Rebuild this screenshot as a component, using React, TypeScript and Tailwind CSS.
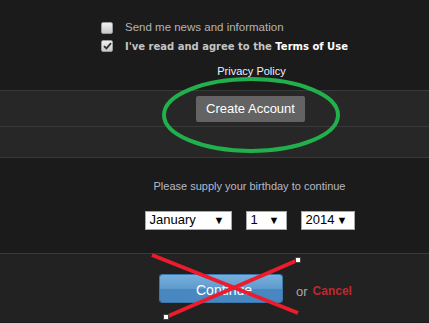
import React from "react";

const MONTH = "January";

function Box({ checked }: { checked?: boolean }) {
  return (
    <span className="flex h-[12px] w-[12px] items-center justify-center rounded-[2px] border border-[#9a9a9a] bg-gradient-to-b from-[#f0f0f0] to-[#c8c8c8]">
      {checked && (
        <svg width="9" height="8" viewBox="0 0 9 8">
          <path d="M1 4.2 L3.4 6.4 L8 1.2" fill="none" stroke="#333" strokeWidth="1.8" />
        </svg>
      )}
    </span>
  );
}

function Select({ value, w }: { value: string; w: string }) {
  return (
    <div
      className={`flex h-[19px] items-center justify-between border border-[#a8a8a8] bg-white pl-[4px] pr-[6px] text-[13px] text-black ${w}`}
    >
      <span>{value}</span>
      <span className="text-[11px]">▼</span>
    </div>
  );
}

export default function App() {
  return (
    <div className="relative h-[323px] w-[429px] overflow-hidden bg-[#1b1b1b] font-['Liberation_Sans',Arial,sans-serif]">
      {/* terms */}
      <div className="flex h-[90px] flex-col pl-[101px] pt-[19px]">
        <div className="flex h-[18px] items-center gap-[12px]">
          <Box />
          <span className="text-[11.5px] text-[#b4b4b4]">Send me news and information</span>
        </div>
        <div className="flex h-[18px] items-center gap-[12px]">
          <Box checked />
          <span className="font-['DejaVu_Sans',sans-serif] text-[10px] font-bold text-[#c4c4c4]">
            I&apos;ve read and agree to the <span className="text-white">Terms of Use</span>
          </span>
        </div>
        <div className="mt-[8px] flex justify-center pr-[27px] text-[11px] text-[#eef2ff]">
          Privacy Policy
        </div>
      </div>

      {/* create account band */}
      <div className="flex h-[37px] items-center justify-center border-y border-[#393939] bg-[#272727] pl-[72px]">
        <button className="h-[26px] w-[109px] rounded-[2px] bg-[#636363] text-[13px] text-white">
          Create Account
        </button>
      </div>
      <div className="h-[31px] border-b border-[#393939] bg-[#272727]" />

      {/* birthday */}
      <div className="flex h-[95px] flex-col items-center pl-[70px] pt-[20px]">
        <p className="text-[11px] text-[#b8b8c8]">Please supply your birthday to continue</p>
        <div className="mt-[16px] flex gap-[14px]">
          <Select value={MONTH} w="w-[87px]" />
          <Select value="1" w="w-[41px]" />
          <Select value="2014" w="w-[54px]" />
        </div>
      </div>

      {/* continue */}
      <div className="flex h-[69px] items-start border-t border-[#3a3a3a] bg-[#222] pl-[159px] pt-[20px]">
        <button className="flex h-[29px] w-[124px] flex-col overflow-hidden rounded-[3px] border border-[#3b78ad] text-[14px] text-white">
          <span className="h-1/2 w-full bg-gradient-to-b from-[#79b0dc] to-[#5c9acd]" />
          <span className="h-1/2 w-full bg-[#4887c0]" />
          <span className="absolute ml-[36px] mt-[5px]">Continue</span>
        </button>
        <span className="ml-[13px] mt-[8px] text-[13px] text-[#a8a8a8]">or</span>
        <span className="ml-[5px] mt-[8px] text-[12px] font-bold text-[#c1272d]">Cancel</span>
      </div>

      {/* annotations */}
      <svg className="pointer-events-none absolute left-0 top-0" width="429" height="323">
        <ellipse cx="251" cy="115" rx="87" ry="36" fill="none" stroke="#21b04b" strokeWidth="4" />
        <line x1="152" y1="255" x2="298" y2="313" stroke="#ec1c2c" strokeWidth="4" />
        <line x1="166" y1="317" x2="298" y2="260" stroke="#ec1c2c" strokeWidth="4" />
        <rect x="295.5" y="257.5" width="5" height="5" fill="#fff" stroke="#444" strokeWidth="1" />
        <rect x="163.5" y="314.5" width="5" height="5" fill="#fff" stroke="#444" strokeWidth="1" />
      </svg>
    </div>
  );
}
